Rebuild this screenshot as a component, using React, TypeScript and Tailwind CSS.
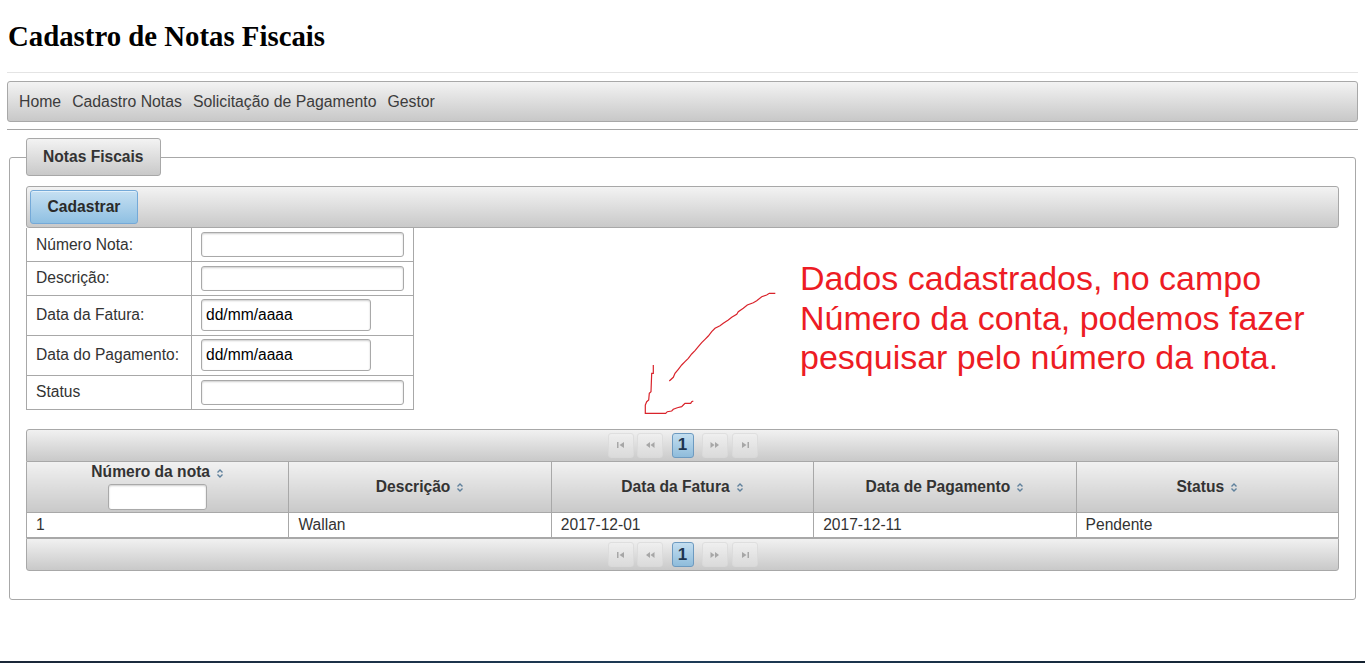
import React from 'react';

const sans = "font-['Liberation_Sans',Arial,sans-serif]";

function SortIcon() {
  return (
    <svg width="8" height="11" viewBox="0 0 8 11" className="inline-block ml-[6px] align-middle">
      <path d="M1.5 4.5 L4 2 L6.5 4.5" fill="none" stroke="#5f819c" strokeWidth="1.4" />
      <path d="M1.5 6.5 L4 9 L6.5 6.5" fill="none" stroke="#5f819c" strokeWidth="1.4" />
    </svg>
  );
}

function PagerIcon({ kind }: { kind: 'first' | 'prev' | 'next' | 'last' }) {
  const c = '#9a9a9a';
  return (
    <svg width="12" height="8" viewBox="0 0 12 8">
      {kind === 'first' && (
        <>
          <rect x="2" y="1" width="1.5" height="6" fill={c} />
          <path d="M9 1 L4.5 4 L9 7 Z" fill={c} />
        </>
      )}
      {kind === 'prev' && (
        <>
          <path d="M6 1 L2 4 L6 7 Z" fill={c} />
          <path d="M10.5 1 L6.5 4 L10.5 7 Z" fill={c} />
        </>
      )}
      {kind === 'next' && (
        <>
          <path d="M1.5 1 L5.5 4 L1.5 7 Z" fill={c} />
          <path d="M6 1 L10 4 L6 7 Z" fill={c} />
        </>
      )}
      {kind === 'last' && (
        <>
          <path d="M3 1 L7.5 4 L3 7 Z" fill={c} />
          <rect x="8.5" y="1" width="1.5" height="6" fill={c} />
        </>
      )}
    </svg>
  );
}

function PagerButton({ kind }: { kind: 'first' | 'prev' | 'next' | 'last' }) {
  return (
    <span className="w-[26px] h-[25px] flex items-center justify-center border border-[#dcdcdc] rounded-[3px] bg-linear-to-b from-[#f0f0f0] to-[#dedede] opacity-80">
      <PagerIcon kind={kind} />
    </span>
  );
}

function Paginator({ top }: { top?: boolean }) {
  return (
    <div
      className={
        'h-[33px] flex items-center justify-center border border-[#a8a8a8] bg-linear-to-b from-[#f1f1f1] to-[#c9c9c9] ' +
        (top ? 'rounded-t-[3px]' : 'rounded-b-[3px]')
      }
    >
      <div className="flex items-center">
        <PagerButton kind="first" />
        <span className="ml-[3px]">
          <PagerButton kind="prev" />
        </span>
        <span className="ml-[9px] w-[22px] h-[25px] flex items-center justify-center border border-[#6d9ac0] rounded-[3px] bg-linear-to-b from-[#c3def0] to-[#8fbcdb] text-[17px] font-bold text-[#1d3550]">
          1
        </span>
        <span className="ml-[8px]">
          <PagerButton kind="next" />
        </span>
        <span className="ml-[4px]">
          <PagerButton kind="last" />
        </span>
      </div>
    </div>
  );
}

const formRows = [
  { label: 'Número Nota:', h: 'h-[33px]', date: false },
  { label: 'Descrição:', h: 'h-[34px]', date: false },
  { label: 'Data da Fatura:', h: 'h-[40px]', date: true },
  { label: 'Data do Pagamento:', h: 'h-[40px]', date: true },
  { label: 'Status', h: 'h-[34px]', date: false },
];

const columns = ['Número da nota', 'Descrição', 'Data da Fatura', 'Data de Pagamento', 'Status'];
const rows = [['1', 'Wallan', '2017-12-01', '2017-12-11', 'Pendente']];

export default function App() {
  return (
    <div className={'relative h-[663px] overflow-hidden flex flex-col bg-white text-[#333] ' + sans}>
      <div className="flex-1 px-[8px]">
        <h1 className="mt-[20px] text-[28.8px] leading-[33px] font-bold text-black font-['Liberation_Serif','Times_New_Roman',serif]">
          Cadastro de Notas Fiscais
        </h1>
        <div className="mt-[19px] -mx-px h-px bg-[#e4e4e4]" />

        <nav className="mt-[8px] -mx-px h-[41px] flex items-center gap-[11px] px-[11px] border border-[#a8a8a8] rounded-[3px] bg-linear-to-b from-[#f3f3f3] to-[#c8c8c8] text-[15.8px] text-[#3c3c3c]">
          <span>Home</span>
          <span>Cadastro Notas</span>
          <span>Solicitação de Pagamento</span>
          <span>Gestor</span>
        </nav>
        <div className="mt-[7px] -mx-px h-px bg-[#a6a6a6]" />

        <fieldset className="mt-[8px] mx-px border border-[#a8a8a8] rounded-[3px] px-[16px] pb-[28px]">
          <legend className="h-[38px] px-[16px] flex items-center border border-[#a8a8a8] rounded-[3px] bg-linear-to-b from-[#f3f3f3] to-[#c9c9c9] text-[15.6px] font-bold text-[#333]">
            Notas Fiscais
          </legend>

          <div className="mt-[10px] h-[42px] flex items-center px-[3px] border border-[#a8a8a8] rounded-[3px] bg-linear-to-b from-[#f3f3f3] to-[#c9c9c9]">
            <button className="w-[108px] h-[34px] border border-[#74a9d8] rounded-[3px] bg-linear-to-b from-[#c6e0f2] to-[#8fc0e2] text-[15.6px] font-bold text-[#2a2a2a] shadow-[inset_0_1px_0_#e2f0fa]">
              Cadastrar
            </button>
          </div>

          <table className="border-collapse text-[15.6px] text-[#333]">
            <tbody>
              {formRows.map((r) => (
                <tr key={r.label} className={r.h}>
                  <td className="w-[165px] border border-t-0 border-[#a8a8a8] px-[9px]">{r.label}</td>
                  <td className="w-[222px] border border-t-0 border-[#a8a8a8] px-[9px]">
                    {r.date ? (
                      <div className="w-[170px] h-[32px] flex items-center px-[4px] border border-[#a9a9a9] rounded-[3px] shadow-[inset_0_1px_2px_rgba(0,0,0,0.2)] text-black">
                        dd/mm/aaaa
                      </div>
                    ) : (
                      <div className="w-[203px] h-[25px] border border-[#a9a9a9] rounded-[3px] shadow-[inset_0_1px_2px_rgba(0,0,0,0.2)]" />
                    )}
                  </td>
                </tr>
              ))}
            </tbody>
          </table>

          <div className="mt-[19px]">
            <Paginator top />
            <table className="w-full border-collapse table-fixed text-[15.6px]">
              <thead>
                <tr className="h-[51px]">
                  {columns.map((c, i) => (
                    <th
                      key={c}
                      className="p-0 border border-t-0 border-[#a8a8a8] bg-linear-to-b from-[#f1f1f1] to-[#c9c9c9] font-bold text-[#333] text-center align-middle"
                    >
                      {i === 0 ? (
                        <div className="flex flex-col items-center leading-[18px]">
                          <span>
                            {c}
                            <SortIcon />
                          </span>
                          <div className="mt-[3px] w-[99px] h-[26px] bg-white border border-[#a9a9a9] rounded-[3px] shadow-[inset_0_1px_2px_rgba(0,0,0,0.2)]" />
                        </div>
                      ) : (
                        <span>
                          {c}
                          <SortIcon />
                        </span>
                      )}
                    </th>
                  ))}
                </tr>
              </thead>
              <tbody>
                {rows.map((r) => (
                  <tr key={r[0]} className="h-[25px]">
                    {r.map((v, i) => (
                      <td key={i} className="py-0 border border-t-0 border-[#a8a8a8] px-[9px] leading-[18px] text-[#333]">
                        {v}
                      </td>
                    ))}
                  </tr>
                ))}
              </tbody>
            </table>
            <Paginator />
          </div>
        </fieldset>
      </div>
      <div className="h-[2px] bg-linear-to-r from-[#1a2738] via-[#1d3b57] to-[#13202e]" />

      {/* anotação desenhada por cima do print */}
      <div className="absolute left-[800px] top-[259px] text-[34px] leading-[39.5px] text-[#ed1c24]">
        <div>Dados cadastrados, no campo</div>
        <div>Número da conta, podemos fazer</div>
        <div>pesquisar pelo número da nota.</div>
      </div>
      <svg
        className="absolute left-[640px] top-[288px]"
        width="140"
        height="130"
        viewBox="640 288 140 130"
        fill="none"
        stroke="#d9232b"
        strokeWidth="1.2"
      >
        <polyline points="775.3,293.3 769.3,293.3 766.7,295 761.7,296.7 756.7,300.7 753.3,302.7 747.3,305 743.3,308.3 738.3,311.7 736.7,314.3 731.7,317.3 728.3,320 723.3,323.3 720,325.7 715,328.3 711.7,331.7 708.3,336 705,339.3 701.7,342.7 698.3,346.7 695,350.7 691.7,354 688.3,358.3 685,361.7 681.7,365 678.3,369.3 675,373.3 673.3,377.3 669.3,381" />
        <polyline points="653.3,365 653.3,373.3 651.7,373.3 651,391.7 649.3,393.3 648.7,400 646.7,401.7 645.3,405 645.3,413.3 665.7,413.3 667.3,411.7 671.7,411 673.3,409.3 677.3,407.7 681.7,406.7 683.3,405 685,403.3 690.7,403.3 691.7,401.7 693.3,401" />
      </svg>
    </div>
  );
}
